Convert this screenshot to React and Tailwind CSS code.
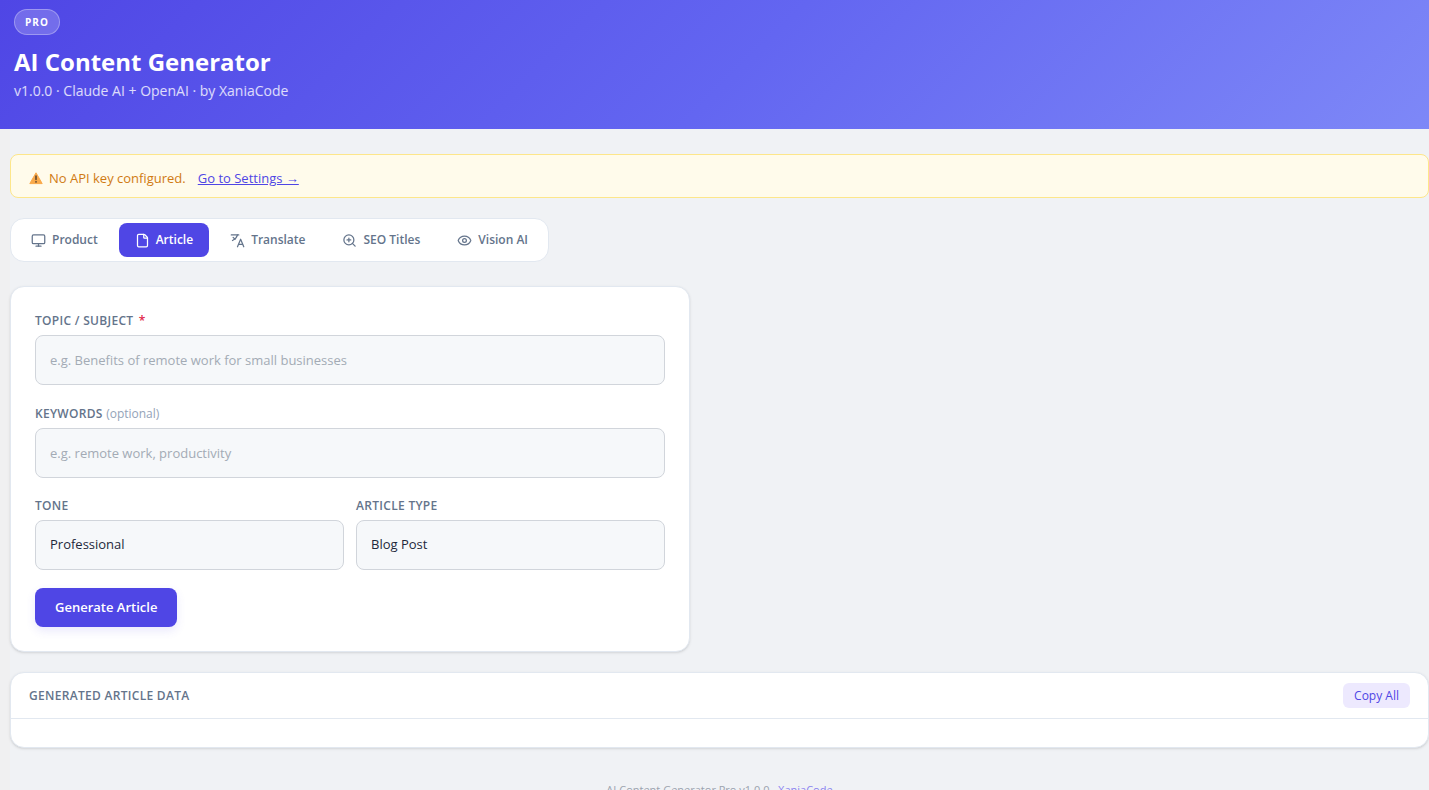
import React, { useState } from "react";
import { Eye, File, Monitor, ZoomIn } from "lucide-react";

function TranslateIcon({ size = 15 }) {
  return (
    <svg
      width={size}
      height={size}
      viewBox="0 0 24 24"
      fill="none"
      stroke="currentColor"
      strokeWidth="2"
      strokeLinecap="round"
      strokeLinejoin="round"
      aria-hidden="true"
    >
      <path d="M2 3h12" />
      <path d="M12 3c-1 4-4 7-8 9" />
      <path d="M5 7l3 3" />
      <path d="M12 22l5-12 5 12" />
      <path d="M14 18h6" />
    </svg>
  );
}

function WarningIcon() {
  return (
    <svg width="14" height="14" viewBox="0 0 14 14" aria-hidden="true">
      <path d="M7 1.8 13.2 12.6H.8Z" fill="#f9a94b" stroke="#f9a94b" strokeWidth="1" strokeLinejoin="round" />
      <path d="M7 5v3.6" stroke="#4b3a2a" strokeWidth="1.4" strokeLinecap="round" />
      <circle cx="7" cy="10.9" r="0.8" fill="#4b3a2a" />
    </svg>
  );
}

const TABS = [
  { id: "product", label: "Product", icon: Monitor },
  { id: "article", label: "Article", icon: File },
  { id: "translate", label: "Translate", icon: TranslateIcon },
  { id: "seo", label: "SEO Titles", icon: ZoomIn },
  { id: "vision", label: "Vision AI", icon: Eye },
];

const labelClass = "block text-[12px] leading-4 font-semibold tracking-wide text-[#64748b] mb-[6px]";
const fieldClass =
  "block w-full h-[50px] px-[14px] rounded-lg border border-[#d1d5db] bg-[#f6f8fa] text-[13px] text-[#1e293b] placeholder:text-[#a3abb5] appearance-none outline-none focus:border-[#4f46e5]";

export default function App() {
  const [tab, setTab] = useState("article");

  return (
    <div className="min-h-screen bg-[#f0f0f1] font-['Open_Sans','Noto_Sans',sans-serif] text-[13px]">
      <header className="flex flex-col items-start px-[14px] pt-[9px] pb-7 text-white bg-[linear-gradient(135deg,#4f46e5_0%,#6366f1_52%,#818cf8_106%)]">
        <span className="flex h-[26px] items-center rounded-full border border-white/30 bg-white/20 px-[10px] text-[10px] font-bold tracking-[1px]">
          PRO
        </span>
        <h1 className="mt-[11px] text-[24px] leading-8 font-bold">AI Content Generator</h1>
        <p className="mt-[3px] text-[14px] leading-5 text-white/80">v1.0.0 · Claude AI + OpenAI · by XaniaCode</p>
      </header>

      <main className="ml-[10px] bg-[#f0f2f5] pt-[25px]">
        <div className="flex items-center rounded-lg border border-[#fde68a] bg-[#fffbeb] px-[18px] pt-[13px] pb-[9px] text-[13px] leading-5 text-[#d07a12]">
          <WarningIcon />
          <span className="ml-[6px]">No API key configured.</span>
          <a href="#settings" className="ml-3 text-[#4f46e5] underline">
            Go to Settings →
          </a>
        </div>

        <nav className="mt-5 flex h-[44px] w-fit items-center gap-[5px] rounded-[14px] border border-[#e2e8f0] bg-white px-1">
          {TABS.map(({ id, label, icon: Icon }) => (
            <button
              key={id}
              type="button"
              onClick={() => setTab(id)}
              className={`flex h-[34px] items-center gap-[6px] rounded-lg px-4 text-[12px] font-semibold ${
                tab === id ? "bg-[#4f46e5] text-white" : "text-[#64748b]"
              }`}
            >
              <Icon size={15} />
              {label}
            </button>
          ))}
        </nav>

        <form
          onSubmit={(e) => e.preventDefault()}
          className="mt-6 w-full max-w-[680px] rounded-[14px] border border-[#e2e8f0] bg-white px-6 pt-[26px] pb-6 shadow-sm"
        >
          <label htmlFor="topic" className={labelClass}>
            TOPIC / SUBJECT <span className="ml-[2px] text-[#e11d48]">*</span>
          </label>
          <input id="topic" type="text" className={fieldClass} placeholder="e.g. Benefits of remote work for small businesses" />

          <div className="mt-[21px]">
            <label htmlFor="keywords" className={labelClass}>
              KEYWORDS <span className="font-normal tracking-normal text-[#94a3b8]">(optional)</span>
            </label>
            <input id="keywords" type="text" className={fieldClass} placeholder="e.g. remote work, productivity" />
          </div>

          <div className="mt-5 grid grid-cols-2 gap-3">
            <div>
              <label htmlFor="tone" className={labelClass}>TONE</label>
              <select id="tone" className={fieldClass}>
                <option>Professional</option>
                <option>Casual</option>
                <option>Friendly</option>
              </select>
            </div>
            <div>
              <label htmlFor="type" className={labelClass}>ARTICLE TYPE</label>
              <select id="type" className={fieldClass}>
                <option>Blog Post</option>
                <option>Guide</option>
                <option>News</option>
              </select>
            </div>
          </div>

          <button
            type="submit"
            className="mt-[18px] h-[39px] rounded-lg bg-[#4f46e5] px-5 text-[13px] font-semibold text-white shadow-[0_4px_10px_rgba(79,70,229,0.12)]"
          >
            Generate Article
          </button>
        </form>

        <section className="mt-5 rounded-[14px] border border-[#e2e8f0] bg-white shadow-sm">
          <div className="flex items-center justify-between border-b border-[#e2e8f0] px-[18px] py-[10px]">
            <h2 className="text-[12px] font-semibold tracking-wide text-[#64748b]">GENERATED ARTICLE DATA</h2>
            <button type="button" className="h-[25px] rounded-md bg-[#ede9fe] px-[11px] text-[12px] font-medium text-[#4f46e5]">
              Copy All
            </button>
          </div>
          <div className="h-7" />
        </section>

        <footer className="mt-8 pb-5 text-center text-[11px] leading-5 text-[#9ca3af]">
          AI Content Generator Pro v1.0.0 ·{" "}
          <a href="#xaniacode" className="text-[#8b83f0]">XaniaCode</a>
        </footer>
      </main>
    </div>
  );
}
